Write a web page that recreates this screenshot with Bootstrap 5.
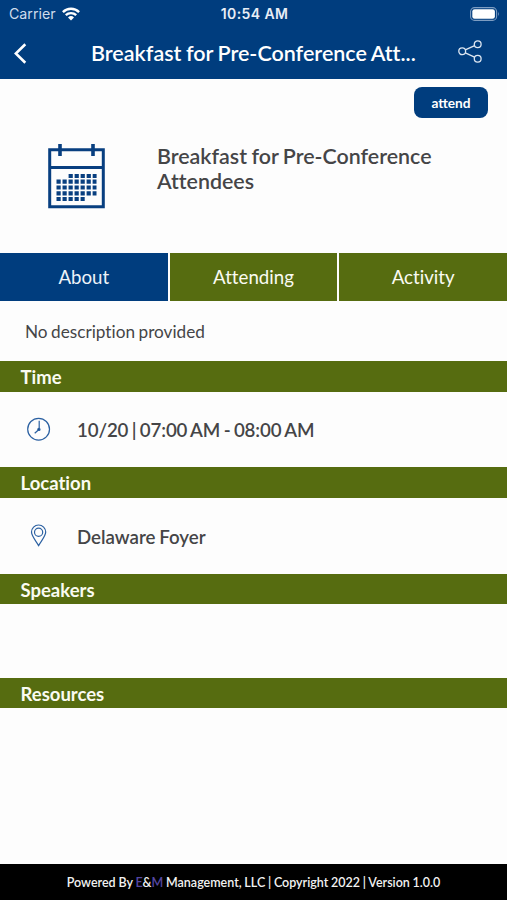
<!DOCTYPE html>
<html lang="en">
<head>
<meta charset="utf-8">
<meta name="viewport" content="width=device-width, initial-scale=1">
<title>Breakfast for Pre-Conference Attendees</title>
<link href="https://cdn.jsdelivr.net/npm/bootstrap@5.3.0/dist/css/bootstrap.min.css" rel="stylesheet">
<style>
:root { --navy: #003d7e; --olive: #566c10; --ink: #454547; }
body { font-family: Lato, "Liberation Sans", sans-serif; color: var(--ink); background: #fdfdfd; font-variant-ligatures: none; word-spacing: -.055em; }
svg { display: block; flex: none; }
.app { height: 900px; overflow: hidden; }
.top { background: var(--navy); height: 79px; flex: none; }
.status { font-family: Inter, sans-serif; height: 27px; font-size: 14.2px; line-height: 27px; padding: 0 7px 0 9px; word-spacing: 0; }
.status > div { flex: 1 1 0; }
.carrier { color: #cfdcec; }
.carrier svg { margin-left: 6px; }
.clock { font-weight: 600; font-size: 14px; letter-spacing: .4px; color: #e8eef6; }
.title-row { height: 52px; padding: 0 25px 0 14px; }
.page-title { font-size: 21.5px; font-weight: 600; line-height: 52px; width: 330px; margin-left: 64px; white-space: nowrap; }
.summary { height: 173.5px; flex: none; }
.btn-attend, .btn-attend:hover { background: var(--navy); color: #fff; width: 74px; height: 31px; border-radius: 8px; font-size: 13.7px; font-weight: 700; line-height: 32px; margin: 8px 19px 0 0; }
.event { padding: 25px 20px 0 48px; }
.event-name { font-size: 21.4px; line-height: 25px; font-weight: 600; margin-left: 52px; padding-top: 1px; white-space: nowrap; }
.tabs { height: 48.5px; gap: 2px; flex: none; }
.tabs .nav-link { background: var(--olive); color: #fafbf2; border-radius: 0; padding: 0; font-size: 18.7px; line-height: 49px; flex: 1 1 0; }
.tabs .nav-link.active { background: var(--navy); color: #eef3f8; }
.description { height: 60.3px; padding-left: 25px; font-size: 17.2px; line-height: 61px; flex: none; }
.section-bar { background: var(--olive); color: #fafbf2; height: 30.4px; padding-left: 20.5px; font-size: 18.5px; line-height: 32px; font-weight: 700; flex: none; }
.detail { height: 75.8px; padding-left: 26px; font-size: 18.7px; font-weight: 600; flex: none; }
.detail span { margin-left: 26px; padding-top: 1.5px; }
.detail .time { letter-spacing: -.12px; word-spacing: -.06em; }
.blank { height: 73.6px; flex: none; }
.foot { height: 36.5px; background: #000; color: #f2f2f2; font-size: 12.5px; font-weight: 600; line-height: 37px; word-spacing: -.03em; white-space: nowrap; flex: none; }
.foot em { font-style: normal; color: #5547a0; }
</style>
<script src="https://cdn.jsdelivr.net/npm/bootstrap@5.3.0/dist/js/bootstrap.bundle.min.js"></script>
</head>
<body>
<div class="app d-flex flex-column">
  <header class="top text-white">
    <div class="status d-flex align-items-center">
      <div class="carrier d-flex align-items-center">Carrier
        <svg width="18" height="14" viewBox="0 0 18 14" fill="none" stroke="#fff" stroke-width="2.4"><path d="M.9 5.1a11.6 11.6 0 0 1 16.2 0M3.8 8.2a7.5 7.5 0 0 1 10.4 0"/><path d="M9 13.6 6 10.5a4.3 4.3 0 0 1 6 0z" fill="#fff" stroke="none"/></svg>
      </div>
      <div class="clock text-center">10:54 AM</div>
      <div class="d-flex justify-content-end">
        <svg width="30" height="14" viewBox="0 0 30 14"><rect x=".6" y=".6" width="26" height="12.8" rx="4" fill="none" stroke="#7d9dc2" stroke-width="1.1"/><rect x="2.3" y="2.3" width="22.6" height="9.4" rx="2.3" fill="#fff"/><path d="M28 4.7q1.8 2.3 0 4.6z" fill="#7d9dc2"/></svg>
      </div>
    </div>
    <div class="title-row d-flex align-items-center">
      <svg width="13" height="21" viewBox="0 0 13 21" fill="none" stroke="#fff" stroke-width="2.6"><path d="M11.3 1.2 1.8 10.5l9.5 9.3"/></svg>
      <h1 class="page-title mb-0">Breakfast for Pre-Conference Att...</h1>
      <svg class="ms-auto mb-1" width="24" height="23" viewBox="0 0 24 23" fill="none" stroke="#dce6f1" stroke-width="1.3"><circle cx="4.2" cy="11.3" r="3.4"/><circle cx="19.7" cy="4.2" r="3.4"/><circle cx="19.7" cy="18.7" r="3.4"/><path d="m7.3 9.9 9.3-4.3M7.3 12.8l9.3 4.4"/></svg>
    </div>
  </header>

  <section class="summary">
    <div class="d-flex justify-content-end"><button class="btn btn-attend border-0 p-0" type="button">attend</button></div>
    <div class="event d-flex">
      <svg width="57" height="66" viewBox="0 0 57 66">
        <path d="M1.7 6.7h53.6v57H1.7zM1.7 24.5h53.6" fill="none" stroke="#083f80" stroke-width="3"/>
        <path d="M12 1v12M45 1v12" stroke="#083f80" stroke-width="3.6"/>
        <path d="M20.6 33h28M8.5 38.7h40M8.5 44.5h40M8.5 50.3h40M8.5 56h28.2" stroke="#083f80" stroke-width="4.2" stroke-dasharray="4.2 1.82" fill="none"/>
      </svg>
      <h2 class="event-name mb-0">Breakfast for Pre-Conference<br>Attendees</h2>
    </div>
  </section>

  <nav class="tabs nav nav-pills flex-nowrap text-center">
    <a class="nav-link active" href="#">About</a>
    <a class="nav-link" href="#">Attending</a>
    <a class="nav-link" href="#">Activity</a>
  </nav>

  <div class="description">No description provided</div>
  <div class="section-bar">Time</div>
  <div class="detail d-flex align-items-center">
    <svg width="25" height="25" viewBox="0 0 25 25" fill="none" stroke="#2c61a2" stroke-width="1.2"><circle cx="12.6" cy="12.2" r="10.9"/><path d="M13.2 3.8v7.6M12.1 13.2 8.7 16.3"/><circle cx="12.9" cy="12.4" r="1.1" fill="#083f80"/></svg>
    <span class="time">10/20 | 07:00 AM - 08:00 AM</span>
  </div>
  <div class="section-bar">Location</div>
  <div class="detail d-flex align-items-center">
    <svg width="25" height="23" viewBox="0 0 25 23" fill="none" stroke="#2c61a2" stroke-width="1.2"><path d="M12.6 21.6C10 17 5.5 12.1 5.5 8.1a7.1 7.1 0 0 1 14.2 0c0 4-4.5 8.9-7.1 13.5z"/><circle cx="12.6" cy="8.2" r="4.1"/></svg>
    <span>Delaware Foyer</span>
  </div>
  <div class="section-bar">Speakers</div>
  <div class="blank"></div>
  <div class="section-bar">Resources</div>

  <footer class="foot mt-auto text-center">Powered By <em>E</em>&amp;<em>M</em> Management, LLC | Copyright 2022 | Version 1.0.0</footer>
</div>
</body>
</html>
